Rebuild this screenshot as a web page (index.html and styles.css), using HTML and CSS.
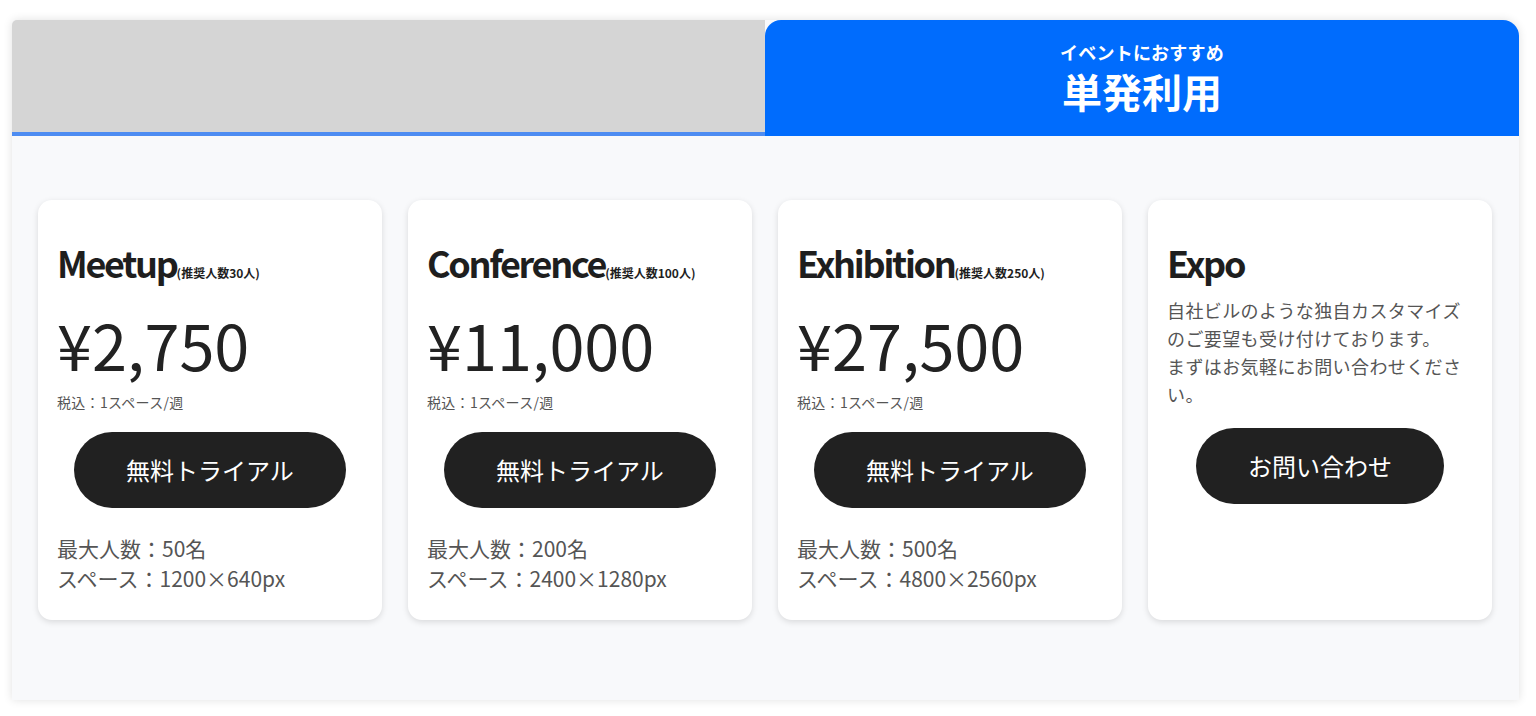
FILE: index.html
```html
<!DOCTYPE html>
<html lang="ja">
<head>
<meta charset="utf-8">
<link rel="stylesheet" href="styles.css">
</head>
<body>
<div class="pricing">
  <div class="tabs">
    <div class="tab tab-off"></div>
    <div class="tab tab-on">
      <div class="tab-sub">イベントにおすすめ</div>
      <div class="tab-main">単発利用</div>
    </div>
  </div>
  <div class="panel">
    <div class="card">
      <h2 class="title">Meetup<span class="rec">(推奨人数30人)</span></h2>
      <div class="price">¥2,750</div>
      <div class="tax">税込：1スペース/週</div>
      <div class="btn-row"><a class="btn">無料トライアル</a></div>
      <div class="spec">最大人数：50名<br>スペース：1200×640px</div>
    </div>
    <div class="card">
      <h2 class="title">Conference<span class="rec">(推奨人数100人)</span></h2>
      <div class="price">¥11,000</div>
      <div class="tax">税込：1スペース/週</div>
      <div class="btn-row"><a class="btn">無料トライアル</a></div>
      <div class="spec">最大人数：200名<br>スペース：2400×1280px</div>
    </div>
    <div class="card">
      <h2 class="title">Exhibition<span class="rec">(推奨人数250人)</span></h2>
      <div class="price">¥27,500</div>
      <div class="tax">税込：1スペース/週</div>
      <div class="btn-row"><a class="btn">無料トライアル</a></div>
      <div class="spec">最大人数：500名<br>スペース：4800×2560px</div>
    </div>
    <div class="card">
      <h2 class="title">Expo</h2>
      <p class="desc">自社ビルのような独自カスタマイズのご要望も受け付けております。<br>まずはお気軽にお問い合わせください。</p>
      <div class="btn-row btn-row-expo"><a class="btn">お問い合わせ</a></div>
    </div>
  </div>
</div>
</body>
</html>
```
FILE: styles.css
```css
* { box-sizing: border-box; }
html, body { margin: 0; background: #fff; }
body {
  padding: 20px 17px 16px 12px;
  font-family: "Noto Sans CJK JP", "Noto Sans", sans-serif;
  color: #222;
}
.pricing {
  background: #f8f9fb;
  box-shadow: 0 0 10px rgba(0,0,0,0.12);
  border-radius: 5px 16px 0 0;
}
.tabs {
  display: grid;
  grid-template-columns: 753px 1fr;
  height: 116px;
}
.tab-off {
  background: #d5d5d5;
  border-top-left-radius: 5px;
  border-bottom: 4px solid #4d8cf2;
}
.tab-on {
  background: #006cfd;
  border-radius: 16px 16px 0 0;
  color: #fff;
  display: flex;
  flex-direction: column;
  align-items: center;
  justify-content: center;
  gap: 3px;
  padding-bottom: 2px;
}
.tab-sub { font-size: 18px; font-weight: 700; line-height: 24px; letter-spacing: 0.2px; }
.tab-main { font-size: 40px; font-weight: 700; line-height: 48px; }
.panel {
  display: grid;
  grid-template-columns: repeat(4, 344px);
  gap: 26px;
  padding: 64px 27px 80px 26px;
}
.card {
  background: #fff;
  border-radius: 14px;
  box-shadow: 0 2px 6px rgba(0,0,0,0.13);
  padding: 38px 19px 27px;
}
.title {
  margin: 0;
  font-size: 36px;
  font-weight: 700;
  line-height: 48px;
  letter-spacing: -2.3px;
  color: #1e1e1e;
}
.rec {
  font-size: 12px;
  line-height: 1;
  letter-spacing: 0;
  font-weight: 700;
}
.price {
  margin-top: 16px;
  font-size: 63px;
  line-height: 84px;
  font-weight: 400;
  color: #222;
}
.tax {
  margin-top: 7px;
  font-size: 14px;
  line-height: 18px;
  letter-spacing: 0.3px;
  color: #555;
}
.btn-row {
  margin-top: 21px;
  display: flex;
  justify-content: center;
}
.btn-row-expo { margin-top: 20px; }
.btn {
  display: flex;
  align-items: center;
  height: 76px;
  padding: 0 52px;
  border-radius: 38px;
  background: #212121;
  color: #fff;
  font-size: 24px;
  line-height: 1;
}
.spec {
  margin-top: 25px;
  font-size: 21px;
  line-height: 30px;
  color: #555;
}
.desc {
  margin: 10px 0 0;
  font-size: 18px;
  line-height: 28px;
  letter-spacing: 0.4px;
  color: #555;
}
```
